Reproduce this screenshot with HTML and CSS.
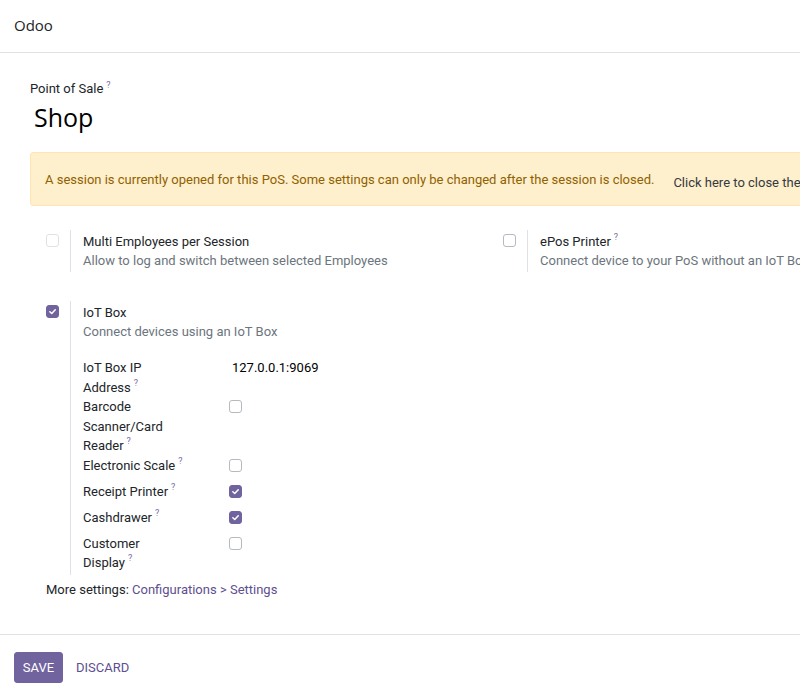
FILE: index.html
```html
<!DOCTYPE html>
<html>
<head>
<meta charset="utf-8">
<link rel="stylesheet" href="styles.css">
</head>
<body>
<header class="topbar">Odoo</header>
<main class="sheet">
  <div class="field-label">Point of Sale<sup class="help">?</sup></div>
  <h1 class="title">Shop</h1>
  <div class="alert">
    <span class="alert-text">A session is currently opened for this PoS. Some settings can only be changed after the session is closed.</span>
    <span class="alert-link">Click here to close the session</span>
  </div>
  <div class="settings">
    <div class="setting">
      <div class="cb-col"><span class="cb disabled"></span></div>
      <div class="right-pane">
        <div class="s-title">Multi Employees per Session</div>
        <div class="s-desc">Allow to log and switch between selected Employees</div>
      </div>
    </div>
    <div class="setting">
      <div class="cb-col"><span class="cb"></span></div>
      <div class="right-pane">
        <div class="s-title">ePos Printer<sup class="help">?</sup></div>
        <div class="s-desc">Connect device to your PoS without an IoT Box</div>
      </div>
    </div>
    <div class="setting full">
      <div class="cb-col"><span class="cb checked"><svg viewBox="0 0 10 10"><path d="M2.6 5.2 L4.3 6.8 L7.5 3.4" fill="none" stroke="#fff" stroke-width="1.4" stroke-linecap="round" stroke-linejoin="round"/></svg></span></div>
      <div class="right-pane">
        <div class="s-title">IoT Box</div>
        <div class="s-desc">Connect devices using an IoT Box</div>
        <div class="sub-fields">
          <div class="sf-label">IoT Box IP Address<sup class="help">?</sup></div>
          <div class="sf-value">127.0.0.1:9069</div>
          <div class="sf-label">Barcode Scanner/Card Reader<sup class="help">?</sup></div>
          <div class="sf-value"><span class="cb"></span></div>
          <div class="sf-label">Electronic Scale<sup class="help">?</sup></div>
          <div class="sf-value"><span class="cb"></span></div>
          <div class="sf-label">Receipt Printer<sup class="help">?</sup></div>
          <div class="sf-value"><span class="cb checked"><svg viewBox="0 0 10 10"><path d="M2.6 5.2 L4.3 6.8 L7.5 3.4" fill="none" stroke="#fff" stroke-width="1.4" stroke-linecap="round" stroke-linejoin="round"/></svg></span></div>
          <div class="sf-label">Cashdrawer<sup class="help">?</sup></div>
          <div class="sf-value"><span class="cb checked"><svg viewBox="0 0 10 10"><path d="M2.6 5.2 L4.3 6.8 L7.5 3.4" fill="none" stroke="#fff" stroke-width="1.4" stroke-linecap="round" stroke-linejoin="round"/></svg></span></div>
          <div class="sf-label">Customer Display<sup class="help">?</sup></div>
          <div class="sf-value"><span class="cb"></span></div>
        </div>
      </div>
    </div>
  </div>
  <div class="more">More settings: <a class="link">Configurations &gt; Settings</a></div>
</main>
<footer class="footer">
  <button class="btn-save">SAVE</button>
  <button class="btn-discard">DISCARD</button>
</footer>
</body>
</html>
```
FILE: styles.css
```css
html, body { margin: 0; padding: 0; }
body {
  width: 800px;
  height: 697px;
  overflow: hidden;
  font-family: Roboto, "Noto Sans", sans-serif;
  font-size: 13px;
  color: #212529;
  background: #fff;
}
.topbar {
  height: 53px;
  box-sizing: border-box;
  border-bottom: 1px solid #dee2e6;
  padding: 0 14px 2px;
  display: flex;
  align-items: center;
  font-family: "Open Sans", sans-serif;
  font-size: 15px;
  color: #212529;
}
.sheet {
  padding: 27px 0 0 30px;
  width: 800px;
  height: 582px;
  box-sizing: border-box;
  border-bottom: 1px solid #dee2e6;
  overflow: hidden;
}
.field-label { font-size: 13px; line-height: 18px; color: #212529; white-space: nowrap; }
.help {
  color: #7c6ca8;
  font-size: 9px;
  margin-left: 3px;
  vertical-align: top;
  line-height: 1;
  position: relative;
  top: 1px;
}
.title {
  margin: 2px 0 0;
  padding-left: 4px;
  font-family: "Open Sans", sans-serif;
  font-weight: 400;
  font-size: 25px;
  line-height: 34px;
  color: #000;
}
.alert {
  margin-top: 18px;
  width: 1000px;
  height: 54px;
  box-sizing: border-box;
  background: #feefcd;
  border: 1px solid #fee5b1;
  border-radius: 3px;
  display: flex;
  align-items: center;
  padding: 0 14px;
  gap: 19px;
  white-space: nowrap;
}
.alert-text { color: #8f6100; }
.alert-link { color: #343a40; position: relative; top: 3px; }
.settings {
  display: grid;
  grid-template-columns: 457px 457px;
  row-gap: 29px;
  padding-top: 24px;
  white-space: nowrap;
}
.setting { display: flex; }
.setting.full { grid-column: 1 / span 2; white-space: normal; }
.cb-col { width: 24px; padding-left: 16px; padding-top: 4px; flex: none; }
.right-pane {
  border-left: 1px solid #dee2e6;
  padding-left: 12px;
  padding-top: 2px;
  padding-bottom: 2px;
}
.s-title { line-height: 19px; color: #212529; }
.s-desc { line-height: 19px; color: #6c757d; }
.cb {
  display: inline-block;
  width: 11px;
  height: 11px;
  border: 1px solid #b4bac0;
  border-radius: 3px;
  box-sizing: content-box;
  background: #fff;
  vertical-align: top;
}
.cb.disabled { border-color: #dee2e6; }
.cb.checked { background: #71639e; border-color: #71639e; }
.cb svg { display: block; width: 11px; height: 11px; }
.sub-fields {
  margin-top: 17px;
  display: grid;
  grid-template-columns: 149px auto;
  width: 300px;
}
.sf-label { line-height: 19.5px; width: 100px; }
.sf-value { color: #000; line-height: 19.5px; min-height: 26px; }
.sf-value .cb { margin-top: 3px; margin-left: -3px; }
.more { margin-top: 5px; padding-left: 16px; color: #212529; line-height: 20px; }
.link { color: #5e4f8f; }
.footer {
  display: flex;
  align-items: center;
  padding: 17px 14px 0;
}
.btn-save {
  background: #71639e;
  color: #fff;
  border: 1px solid #71639e;
  border-radius: 3px;
  font-family: Roboto, "Noto Sans", sans-serif;
  font-size: 13px;
  height: 31px;
  width: 49px;
  padding: 0;
}
.btn-discard {
  background: none;
  border: none;
  color: #5e4f8f;
  font-family: Roboto, "Noto Sans", sans-serif;
  font-size: 13px;
  padding: 0 13px;
  height: 31px;
}
```
